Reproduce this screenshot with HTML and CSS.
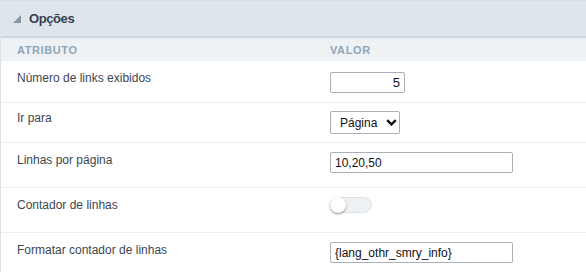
FILE: index.html
```html
<!DOCTYPE html>
<html lang="pt">
<head>
    <meta charset="UTF-8">
    <meta name="viewport" content="width=device-width, initial-scale=1.0">
    <title>Opções</title>
    <link rel="stylesheet" href="styles.css">
</head>
<body>
    <div class="panel">
        <div class="panel-title">
            <svg class="caret" width="8" height="8" viewBox="0 0 8 8"><polygon points="8,0 8,8 0,8" fill="#8a96a3"/></svg>
            <span>Opções</span>
        </div>

        <div class="row head">
            <div class="attr">ATRIBUTO</div>
            <div class="val">VALOR</div>
        </div>

        <div class="row r1">
            <div class="attr">Número de links exibidos</div>
            <div class="val"><input type="text" class="inp num" value="5"></div>
        </div>

        <div class="row r2">
            <div class="attr">Ir para</div>
            <div class="val">
                <div class="select">
                    <span>Página</span>
                    <svg width="11" height="7" viewBox="0 0 11 7"><path d="M1.2 1.2 L5.5 5.4 L9.8 1.2" fill="none" stroke="#111" stroke-width="2.4"/></svg>
                </div>
            </div>
        </div>

        <div class="row r3">
            <div class="attr">Linhas por página</div>
            <div class="val"><input type="text" class="inp wide" value="10,20,50"></div>
        </div>

        <div class="row r4">
            <div class="attr">Contador de linhas</div>
            <div class="val"><div class="toggle"><div class="knob"></div></div></div>
        </div>

        <div class="row r5">
            <div class="attr">Formatar contador de linhas</div>
            <div class="val"><input type="text" class="inp wide" value="{lang_othr_smry_info}"></div>
        </div>
    </div>
</body>
</html>
```

FILE: styles.css
```css
body {
    margin: 0;
    font-family: "Liberation Sans", Arial, sans-serif;
    background: #fff;
}
.panel {
    border-left: 1px solid #dde3e8;
    height: 272px;
    box-sizing: border-box;
}
.panel-title {
    height: 35px;
    border-top: 1px solid #d6dde4;
    border-bottom: 2px solid #cfd7de;
    background-color: #dfe5ec;
    display: flex;
    align-items: center;
    padding-left: 12px;
    font-size: 13px;
    font-weight: bold;
    letter-spacing: -0.4px;
    color: #34414f;
}
.caret {
    margin-right: 8px;
    margin-top: 1px;
}
.row {
    display: flex;
    align-items: flex-start;
    border-bottom: 1px solid #edf0f2;
    box-sizing: border-box;
    font-size: 12px;
    color: #3c4650;
}
.attr {
    width: 313px;
    padding-left: 16px;
    padding-top: 10px;
}
.val {
    flex: 1;
    padding-top: 9px;
}
.head {
    height: 23px;
    align-items: center;
    background-color: #eef2f5;
    border-bottom: none;
    font-size: 11px;
    font-weight: bold;
    letter-spacing: 0.6px;
    color: #8ea5b8;
}
.head .attr, .head .val { padding-top: 0; }
.r1 { height: 42px; }
.r2 { height: 40px; }
.r3 { height: 45px; }
.r4 { height: 45px; }
.r5 { border-bottom: none; }
.r1 .val { padding-top: 11px; }
.r2 .attr { padding-top: 8px; }
.r2 .val { padding-top: 8px; }
.inp {
    box-sizing: border-box;
    height: 21px;
    border: 1px solid #a9b0b8;
    border-radius: 2px;
    font-family: "Liberation Sans", Arial, sans-serif;
    font-size: 12px;
    color: #111;
    padding: 0 4px;
    margin: 0;
}
.num {
    width: 75px;
    text-align: right;
    font-size: 13px;
}
.wide {
    width: 183px;
}
.select {
    box-sizing: border-box;
    width: 70px;
    height: 23px;
    border: 1px solid #a9b0b8;
    border-radius: 2px;
    display: flex;
    align-items: center;
    justify-content: space-between;
    padding: 0 2px 0 9px;
    font-size: 12px;
    color: #111;
}
.toggle {
    box-sizing: border-box;
    width: 42px;
    height: 16px;
    border: 1px solid #dce2e6;
    border-radius: 8px;
    background-color: #eef1f3;
    position: relative;
}
.knob {
    position: absolute;
    left: -1px;
    top: -1px;
    width: 16px;
    height: 16px;
    border-radius: 50%;
    background: #fff;
    box-shadow: 0 1px 2px rgba(0, 0, 0, 0.45);
}
```
